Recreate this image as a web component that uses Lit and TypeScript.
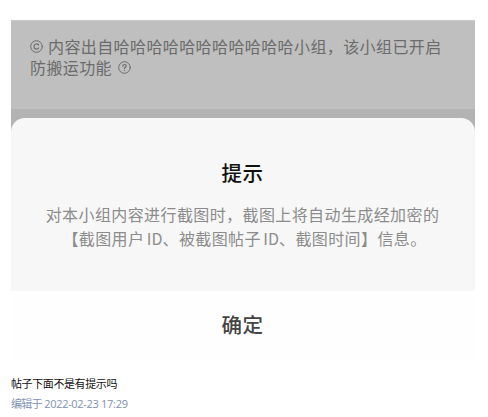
import { LitElement, css, html } from 'lit'
import { customElement } from 'lit/decorators.js'

@customElement('app-root')
export class AppRoot extends LitElement {
  static styles = css`
    :host {
      display: block;
      box-sizing: border-box;
      width: 488px;
      height: 417px;
      padding: 20px 13px 0 11px;
      overflow: hidden;
      background: #fff;
      font-family: 'Noto Sans CJK SC', sans-serif;
    }

    .shot {
      display: flex;
      flex-direction: column;
      height: 341px;
      background: #b3b3b3;
    }

    .notice {
      box-sizing: border-box;
      height: 89px;
      padding: 15px 0 0 19px;
      border-top: 1px solid #c9c9c9;
      background: #bfbfbf;
      color: #6b6b6b;
      font-size: 16px;
      line-height: 21px;
      letter-spacing: 0.4px;
      white-space: nowrap;
    }

    .row {
      display: flex;
      align-items: center;
      height: 21px;
    }

    .icon {
      flex: none;
      width: 13px;
      height: 13px;
      fill: none;
      stroke: #6b6b6b;
      stroke-linecap: round;
    }

    .copyright {
      margin-right: 5px;
    }

    .help {
      margin-left: 6px;
    }

    /* Dialog */
    .sheet {
      flex: 1;
      display: flex;
      flex-direction: column;
      margin-top: 9px;
      border-radius: 14px 14px 0 0;
      overflow: hidden;
      background: #f7f7f7;
      text-align: center;
    }

    .body {
      height: 173px;
      box-sizing: border-box;
      padding-top: 39px;
    }

    .title {
      padding-right: 1px;
      color: #111;
      font-size: 20.5px;
      font-weight: 500;
      line-height: 30px;
      letter-spacing: 0.4px;
    }

    .text {
      margin-top: 15px;
      padding-right: 1px;
      color: #8c8c8c;
      font-size: 16px;
      line-height: 24px;
      letter-spacing: 0.4px;
      white-space: nowrap;
    }

    .text .line {
      padding-left: 4px;
      word-spacing: -1.6px;
    }

    .text .latin {
      letter-spacing: 0;
    }

    .confirm {
      flex: 1;
      padding-right: 1px;
      background: #fefefe;
      color: #444;
      font-size: 20.5px;
      font-weight: 500;
      line-height: 67px;
      letter-spacing: 0.4px;
    }

    .post {
      margin-top: 12px;
      color: #121212;
      font-size: 11px;
      line-height: 20px;
      letter-spacing: -0.4px;
    }

    .edited {
      margin-top: 1px;
      color: #8091b0;
      font-family: 'Open Sans', 'Noto Sans CJK SC', sans-serif;
      font-size: 11px;
      line-height: 20px;
      letter-spacing: -0.3px;
    }

    .edited .label {
      letter-spacing: -0.8px;
    }
  `

  render() {
    return html`
      <div class="shot">
        <div class="notice">
          <div class="row">
            <svg class="icon copyright" viewBox="0 0 13 13">
              <circle cx="6.5" cy="6.5" r="5.8" />
              <path d="M8.6 5C7.7 3.4 4 3.4 4 6.5S7.7 9.6 8.6 8" stroke-width="1.2" />
            </svg>
            <span>内容出自哈哈哈哈哈哈哈哈哈哈哈小组，该小组已开启</span>
          </div>
          <div class="row">
            <span>防搬运功能</span>
            <svg class="icon help" viewBox="0 0 13 13">
              <circle cx="6.5" cy="6.5" r="5.8" />
              <path d="M4.8 5.2C4.8 3 8.2 3 8.2 5C8.2 6.2 6.5 6.2 6.5 7.5M6.5 9.3V9.4" stroke-width="1.2" />
            </svg>
          </div>
        </div>
        <div class="sheet">
          <div class="body">
            <div class="title">提示</div>
            <div class="text">
              <div>对本小组内容进行截图时，截图上将自动生成经加密的</div>
              <div class="line">【截图用户 <span class="latin">ID</span>、被截图帖子 <span class="latin">ID</span>、截图时间】信息。</div>
            </div>
          </div>
          <div class="confirm">确定</div>
        </div>
      </div>
      <div class="post">帖子下面不是有提示吗</div>
      <div class="edited"><span class="label">编辑于</span> 2022-02-23 17:29</div>
    `
  }
}
